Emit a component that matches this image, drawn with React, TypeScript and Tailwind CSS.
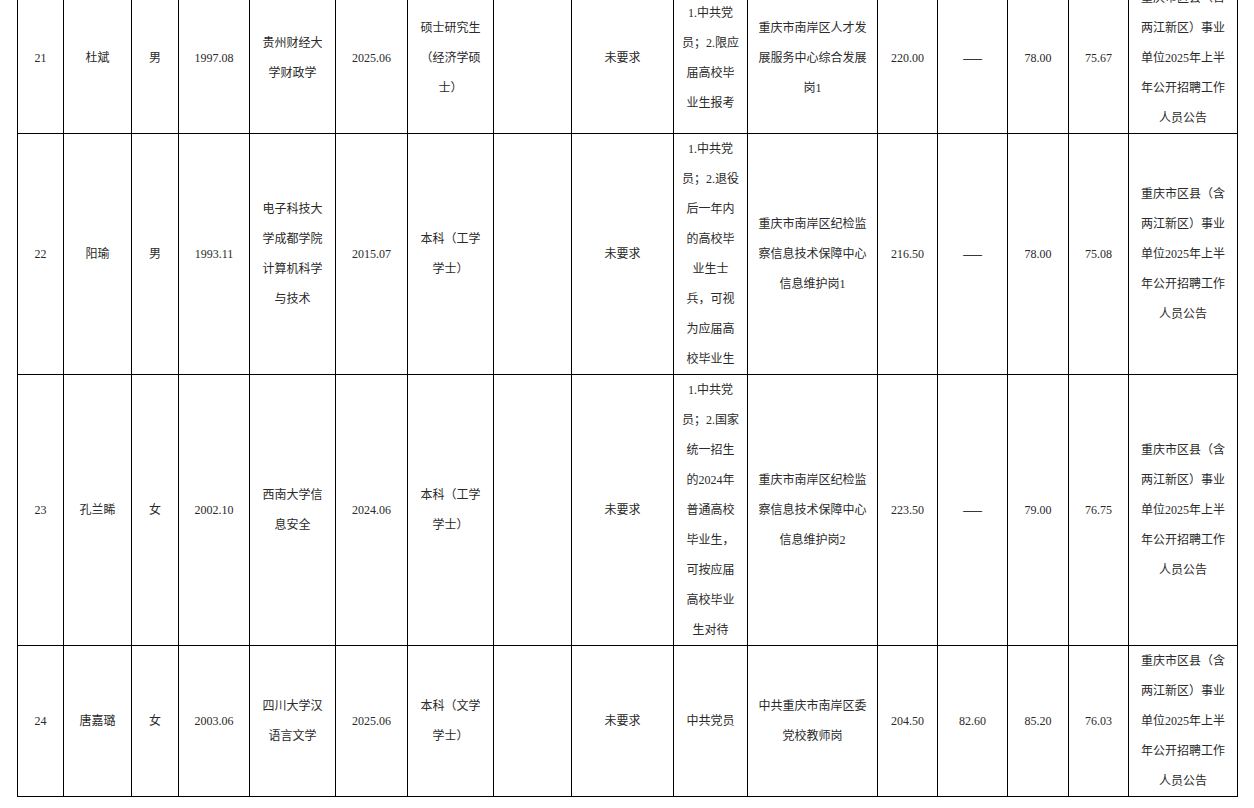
import React from "react";

const widths = [46, 68, 47, 71, 86, 72, 86, 78, 102, 74, 130, 60, 70, 61, 60, 109];

const notice = ["重庆市区县（含", "两江新区）事业", "单位2025年上半", "年公开招聘工作", "人员公告"];

const rows: string[][][] = [
  [
    ["21"], ["杜斌"], ["男"], ["1997.08"], ["贵州财经大", "学财政学"], ["2025.06"],
    ["硕士研究生", "（经济学硕", "士）"], [""], ["未要求"],
    ["1.中共党", "员；2.限应", "届高校毕", "业生报考"],
    ["重庆市南岸区人才发", "展服务中心综合发展", "岗1"],
    ["220.00"], ["——"], ["78.00"], ["75.67"], notice,
  ],
  [
    ["22"], ["阳瑜"], ["男"], ["1993.11"], ["电子科技大", "学成都学院", "计算机科学", "与技术"], ["2015.07"],
    ["本科（工学", "学士）"], [""], ["未要求"],
    ["1.中共党", "员；2.退役", "后一年内", "的高校毕", "业生士", "兵，可视", "为应届高", "校毕业生"],
    ["重庆市南岸区纪检监", "察信息技术保障中心", "信息维护岗1"],
    ["216.50"], ["——"], ["78.00"], ["75.08"], notice,
  ],
  [
    ["23"], ["孔兰睎"], ["女"], ["2002.10"], ["西南大学信", "息安全"], ["2024.06"],
    ["本科（工学", "学士）"], [""], ["未要求"],
    ["1.中共党", "员；2.国家", "统一招生", "的2024年", "普通高校", "毕业生，", "可按应届", "高校毕业", "生对待"],
    ["重庆市南岸区纪检监", "察信息技术保障中心", "信息维护岗2"],
    ["223.50"], ["——"], ["79.00"], ["76.75"], notice,
  ],
  [
    ["24"], ["唐嘉璐"], ["女"], ["2003.06"], ["四川大学汉", "语言文学"], ["2025.06"],
    ["本科（文学", "学士）"], [""], ["未要求"],
    ["中共党员"],
    ["中共重庆市南岸区委", "党校教师岗"],
    ["204.50"], ["82.60"], ["85.20"], ["76.03"], notice,
  ],
];

export default function App() {
  return (
    <div className="bg-white w-[1254px] h-[808px] overflow-hidden">
      <div className="pl-[17px] -mt-[18px]">
        <table
          className="border-collapse table-fixed w-[1221px] text-[12px] leading-[30px] text-[#2a2a2a]"
          style={{ fontFamily: '"Liberation Serif", "Noto Sans CJK SC", serif' }}
        >
          <colgroup>
            {widths.map((w, i) => (
              <col key={i} style={{ width: w }} />
            ))}
          </colgroup>
          <tbody>
            {rows.map((r, ri) => (
              <tr key={ri}>
                {r.map((lines, ci) => (
                  <td
                    key={ci}
                    className="border border-black p-0 text-center align-middle whitespace-nowrap"
                  >
                    {lines.map((l, li) =>
                      l === "——" ? (
                        <div
                          key={li}
                          className="h-[30px] text-black font-['Noto_Sans_CJK_SC',sans-serif]"
                        >
                          {l}
                        </div>
                      ) : (
                        <div key={li} className="h-[30px]">
                          {l}
                        </div>
                      )
                    )}
                  </td>
                ))}
              </tr>
            ))}
          </tbody>
        </table>
      </div>
    </div>
  );
}
